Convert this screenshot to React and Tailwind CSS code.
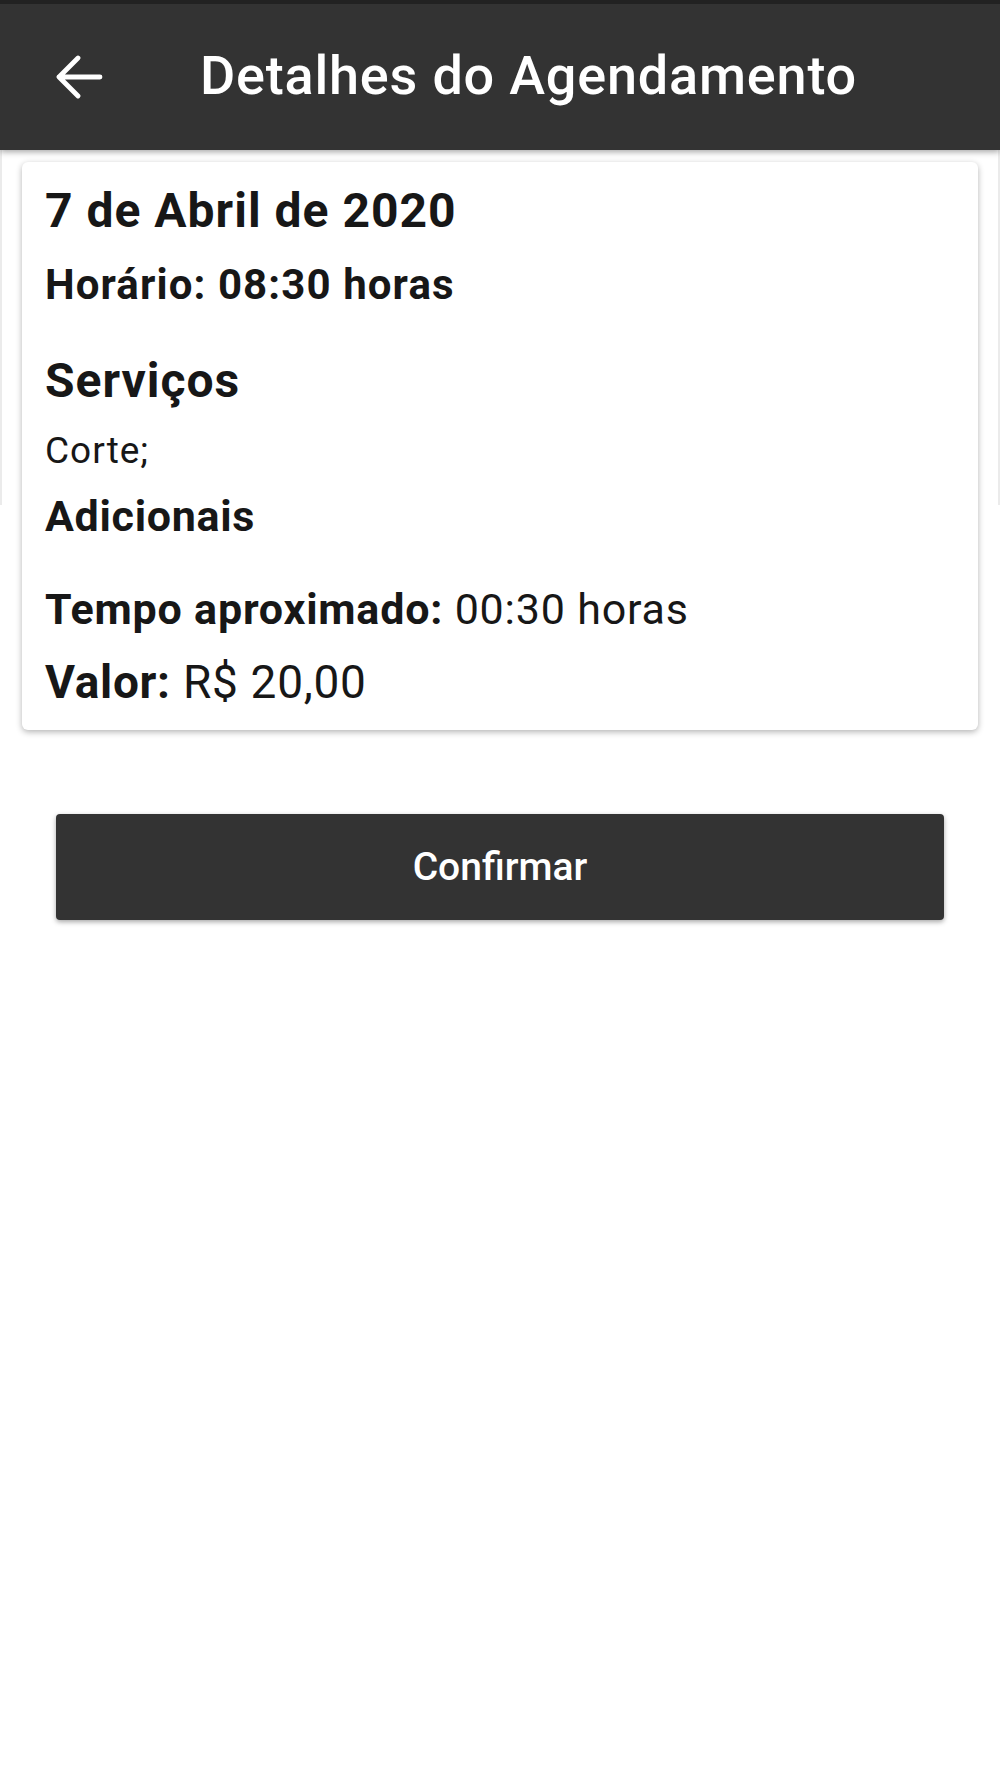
const font = { fontFamily: "Roboto, 'Liberation Sans', sans-serif" };

function BackArrow() {
  return (
    <svg width="48" height="44" viewBox="0 0 48 44" fill="none" className="shrink-0">
      <path d="M45 22H4M23 3L4 22l19 19" stroke="white" strokeWidth="4.8" strokeLinecap="round" strokeLinejoin="round" />
    </svg>
  );
}

export default function App() {
  return (
    <div className="w-[1000px] min-h-[1778px] bg-white text-[#171717]" style={font}>
      <header className="h-[150px] bg-[#333333] border-t-4 border-[#222222] flex items-center pl-[55px] shadow-[0_2px_6px_rgba(0,0,0,0.35)] relative z-10">
        <BackArrow />
        <h1 className="ml-[97px] text-white text-[54px] tracking-[0.8px] font-medium leading-none -mt-[2px]">
          Detalhes do Agendamento
        </h1>
      </header>

      <main className="pt-[12px] relative">
        {/* faint frame of the view behind the card */}
        <div className="absolute left-0 right-0 top-0 h-[355px] border-x-2 border-[#ebebeb]" />

        <section className="relative mx-[22px] bg-white rounded-[6px] shadow-[0_2px_6px_rgba(0,0,0,0.3)] pl-[23px] pr-6 pt-[21px] pb-[22px]">
          <h2 className="text-[48px] tracking-[1px] leading-[56px] font-bold">7 de Abril de 2020</h2>
          <p className="mt-[24px] text-[42px] tracking-[1.1px] leading-[44px] font-bold">Horário: 08:30 horas</p>

          <h3 className="mt-[48px] text-[48px] tracking-[1px] leading-[52px] font-bold">Serviços</h3>
          <p className="mt-[21px] text-[37px] tracking-[1px] leading-[46px]">Corte;</p>
          <h4 className="mt-[17px] text-[43px] tracking-[0.7px] leading-[50px] font-bold">Adicionais</h4>

          <p className="mt-[44px] text-[43px] tracking-[0.8px] leading-[48px]">
            <span className="font-bold">Tempo aproximado:</span> 00:30 horas
          </p>
          <p className="mt-[23px] text-[46px] tracking-[0.7px] leading-[52px]">
            <span className="font-bold">Valor:</span> R$ 20,00
          </p>
        </section>

        <button className="relative mt-[84px] ml-[56px] w-[888px] h-[106px] bg-[#333333] rounded-[4px] shadow-[0_2px_5px_rgba(0,0,0,0.35)] text-white text-[39px] font-medium flex items-center justify-center">
          Confirmar
        </button>
      </main>
    </div>
  );
}
